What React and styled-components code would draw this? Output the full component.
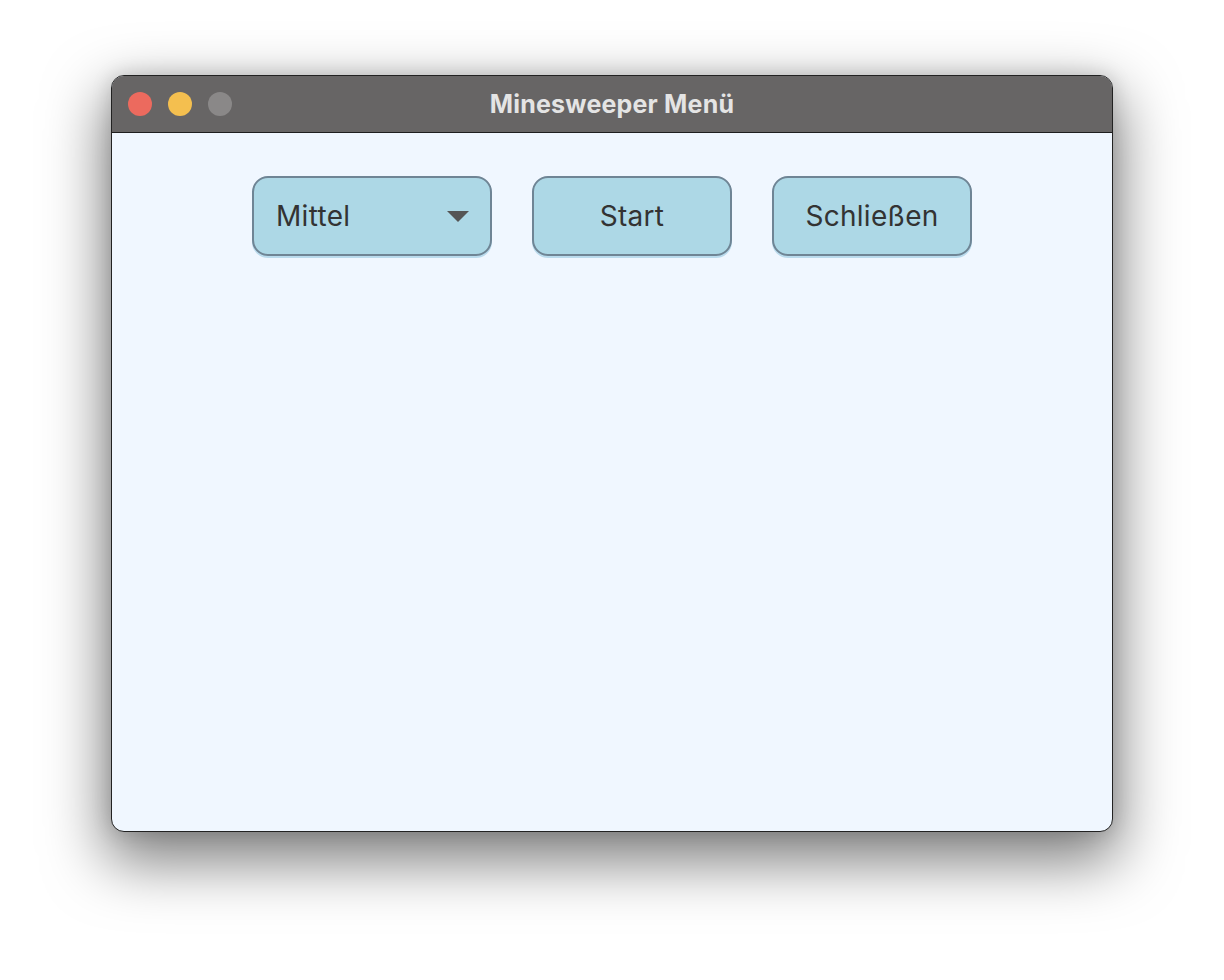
import React from "react";
import styled, { createGlobalStyle } from "styled-components";

const Global = createGlobalStyle`
  html, body { margin: 0; padding: 0; background: #ffffff; }
  body { font-family: Inter, "Noto Sans", sans-serif; }
`;

const Page = styled.div`
  width: 1224px;
  height: 980px;
  display: flex;
  justify-content: center;
  align-items: flex-start;
  padding-top: 75px;
  box-sizing: border-box;
  background: #ffffff;
`;

const Window = styled.div`
  width: 1002px;
  height: 757px;
  box-sizing: border-box;
  border: 1px solid #222;
  border-radius: 13px;
  overflow: hidden;
  background: #f0f7ff;
  box-shadow: 0 24px 60px 6px rgba(0, 0, 0, 0.5), 0 0 20px rgba(0, 0, 0, 0.15);
  display: flex;
  flex-direction: column;
`;

const TitleBar = styled.div`
  height: 56px;
  flex: none;
  background: #676565;
  border-bottom: 1px solid #1e1e1e;
  display: flex;
  align-items: center;
  position: relative;
  padding-left: 16px;
  gap: 16px;
`;

const Light = styled.span`
  width: 24px;
  height: 24px;
  border-radius: 50%;
  background: ${(p) => p.$color};
`;

const Title = styled.div`
  position: absolute;
  left: 0;
  right: 0;
  top: 0;
  bottom: 0;
  display: flex;
  align-items: center;
  justify-content: center;
  color: #e4e4e4;
  font-size: 25px;
  letter-spacing: 0.2px;
  font-weight: 700;
  pointer-events: none;
`;

const Content = styled.div`
  flex: 1;
  display: flex;
  justify-content: center;
  align-items: flex-start;
  gap: 40px;
  padding-top: 43px;
`;

const Button = styled.div`
  width: ${(p) => p.$w}px;
  height: 80px;
  box-sizing: border-box;
  border: 2px solid #6f8595;
  border-radius: 16px;
  background: #add8e6;
  box-shadow: 0 2px 0 rgba(150, 200, 225, 0.6);
  display: flex;
  align-items: center;
  justify-content: ${(p) => (p.$select ? "space-between" : "center")};
  padding: ${(p) => (p.$select ? "0 21px 0 22px" : "0")};
  color: #333333;
  font-size: 28px;
  letter-spacing: 0.3px;
  font-family: Inter, "Noto Sans", sans-serif;
`;

const Caret = styled.svg`
  width: 22px;
  height: 11px;
`;

export default function App() {
  return (
    <>
      <Global />
      <Page>
        <Window>
          <TitleBar>
            <Light $color="#ec6a5e" />
            <Light $color="#f4bf4f" />
            <Light $color="#8a8888" />
            <Title>Minesweeper Menü</Title>
          </TitleBar>
          <Content>
            <Button $w={240} $select>
              <span>Mittel</span>
              <Caret viewBox="0 0 22 11">
                <path d="M0 0 H22 L11 11 Z" fill="#555555" />
              </Caret>
            </Button>
            <Button $w={200}>Start</Button>
            <Button $w={200}>Schließen</Button>
          </Content>
        </Window>
      </Page>
    </>
  );
}
